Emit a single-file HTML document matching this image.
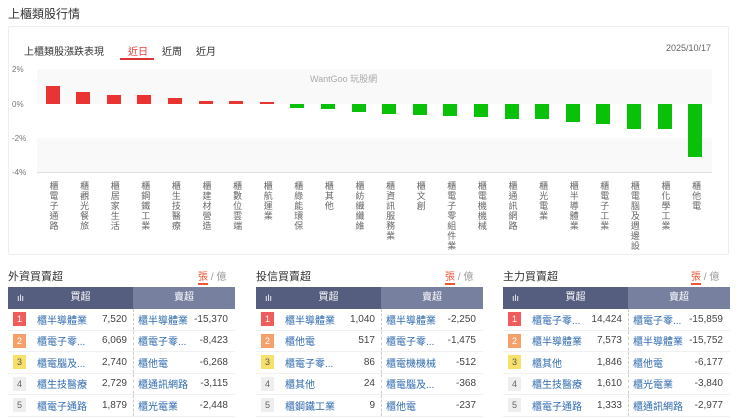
<!DOCTYPE html>
<html><head><meta charset="utf-8"><style>
*{margin:0;padding:0;box-sizing:border-box}
body{width:740px;height:418px;background:#fff;font-family:"Liberation Sans","Noto Sans CJK TC",sans-serif;position:relative;overflow:hidden;color:#333}
.a{position:absolute}
.bar{position:absolute;width:14px}
.r{background:#e93433}.g{background:#0ac10a}
.lab{position:absolute;top:181px;writing-mode:vertical-rl;font-size:9px;color:#666;line-height:9px;letter-spacing:1px;width:10px;margin-left:-5px}
.ax{position:absolute;left:12px;font-size:8px;color:#777;width:22px;text-align:left}
.tb{position:absolute;top:287px;width:227px}
.hd{height:22px;display:flex;color:#fff;font-size:10px;line-height:22px}
.hd .h1{background:#555e7f;width:125px;position:relative;text-align:center;padding-left:20px}
.hd .h2{background:#7880a0;flex:1;text-align:center}
.row{height:21.5px;display:flex;align-items:center;font-size:10px;border-bottom:1px solid #f0f0f0;position:relative}
.rk{width:13px;height:14px;font-size:9px;line-height:14px;text-align:center;margin-left:5px;color:#fff;flex:none}
.n1{background:#f05b5b}.n2{background:#f5a06b}.n3{background:#f8e16a;color:#555}.n4,.n5{background:#eee;color:#666}
.nm{color:#2f6aae;margin-left:11px;width:58px;white-space:nowrap;flex:none}
.v1{width:32px;text-align:right;color:#444;flex:none}
.sep{position:absolute;left:125px;top:0;bottom:0;border-left:1px dashed #ccc}
.nm2{color:#2f6aae;margin-left:11px;width:52px;white-space:nowrap;flex:none}
.v2{width:38px;text-align:right;color:#444;flex:none}
.tt{position:absolute;top:268px;font-size:11px;color:#333}
.sw{position:absolute;top:268px;font-size:10px;color:#999}
.sw b{color:#e53;font-weight:normal;border-bottom:2px solid #e53}
</style></head><body>
<div class="a" style="left:8px;top:5px;font-size:12px;color:#333">上櫃類股行情</div>
<div class="a" style="left:8px;top:26px;width:721px;height:229px;border:1px solid #eee;border-radius:2px"></div>
<div class="a" style="left:24px;top:43px;font-size:10px;color:#333">上櫃類股漲跌表現</div>
<div class="a" style="left:128px;top:43px;font-size:10px;color:#e03b3b">近日</div>
<div class="a" style="left:120px;top:58px;width:34px;height:2px;background:#d33"></div>
<div class="a" style="left:162px;top:43px;font-size:10px;color:#333">近周</div>
<div class="a" style="left:196px;top:43px;font-size:10px;color:#333">近月</div>
<div class="a" style="left:666px;top:43px;font-size:9px;color:#666">2025/10/17</div>
<div class="a" style="left:37px;top:69px;width:675px;height:35px;background:#f9f9f9"></div>
<div class="a" style="left:37px;top:138px;width:675px;height:34px;background:#f9f9f9"></div>
<div class="a" style="left:37px;top:172px;width:675px;height:1px;background:#ddd"></div>
<div class="ax" style="top:65px">2%</div><div class="ax" style="top:100px">0%</div><div class="ax" style="top:134px">-2%</div><div class="ax" style="top:168px">-4%</div>
<div class="a" style="left:310px;top:72px;font-size:9px;color:#aaa">WantGoo 玩股網</div>
<div class="bar r" style="left:45.5px;top:86px;height:18px"></div>
<div class="bar r" style="left:76.1px;top:92px;height:12px"></div>
<div class="bar r" style="left:106.7px;top:95px;height:9px"></div>
<div class="bar r" style="left:137.3px;top:95px;height:9px"></div>
<div class="bar r" style="left:167.9px;top:98px;height:6px"></div>
<div class="bar r" style="left:198.5px;top:101px;height:3px"></div>
<div class="bar r" style="left:229.1px;top:101px;height:3px"></div>
<div class="bar r" style="left:259.7px;top:102px;height:2px"></div>
<div class="bar g" style="left:290.3px;top:104px;height:4px"></div>
<div class="bar g" style="left:320.9px;top:104px;height:5px"></div>
<div class="bar g" style="left:351.5px;top:104px;height:8px"></div>
<div class="bar g" style="left:382.1px;top:104px;height:10px"></div>
<div class="bar g" style="left:412.7px;top:104px;height:11px"></div>
<div class="bar g" style="left:443.3px;top:104px;height:12px"></div>
<div class="bar g" style="left:473.9px;top:104px;height:13px"></div>
<div class="bar g" style="left:504.5px;top:104px;height:15px"></div>
<div class="bar g" style="left:535.1px;top:104px;height:15px"></div>
<div class="bar g" style="left:565.7px;top:104px;height:18px"></div>
<div class="bar g" style="left:596.3px;top:104px;height:20px"></div>
<div class="bar g" style="left:626.9px;top:104px;height:25px"></div>
<div class="bar g" style="left:657.5px;top:104px;height:25px"></div>
<div class="bar g" style="left:688.1px;top:104px;height:53px"></div>
<div class="lab" style="left:52.5px">櫃電子通路</div>
<div class="lab" style="left:83.1px">櫃觀光餐旅</div>
<div class="lab" style="left:113.7px">櫃居家生活</div>
<div class="lab" style="left:144.3px">櫃鋼鐵工業</div>
<div class="lab" style="left:174.9px">櫃生技醫療</div>
<div class="lab" style="left:205.5px">櫃建材營造</div>
<div class="lab" style="left:236.1px">櫃數位雲端</div>
<div class="lab" style="left:266.7px">櫃航運業</div>
<div class="lab" style="left:297.3px">櫃綠能環保</div>
<div class="lab" style="left:327.9px">櫃其他</div>
<div class="lab" style="left:358.5px">櫃紡織纖維</div>
<div class="lab" style="left:389.1px">櫃資訊服務業</div>
<div class="lab" style="left:419.7px">櫃文創</div>
<div class="lab" style="left:450.3px">櫃電子零組件業</div>
<div class="lab" style="left:480.9px">櫃電機機械</div>
<div class="lab" style="left:511.5px">櫃通訊網路</div>
<div class="lab" style="left:542.1px">櫃光電業</div>
<div class="lab" style="left:572.7px">櫃半導體業</div>
<div class="lab" style="left:603.3px">櫃電子工業</div>
<div class="lab" style="left:633.9px">櫃電腦及週邊設</div>
<div class="lab" style="left:664.5px">櫃化學工業</div>
<div class="lab" style="left:695.1px">櫃他電</div>

<div class="tt" style="left:8px">外資買賣超</div><div class="sw" style="left:198px"><b>張</b> / 億</div>
<div class="tt" style="left:256px">投信買賣超</div><div class="sw" style="left:445px"><b>張</b> / 億</div>
<div class="tt" style="left:503px">主力買賣超</div><div class="sw" style="left:691px"><b>張</b> / 億</div>

<div class="tb" style="left:8px">
<div class="hd"><div class="h1"><span style="position:absolute;left:9px;font-size:9px">ılı</span>買超</div><div class="h2">賣超</div></div>
<div class="row"><div class="sep"></div><div class="rk n1">1</div><div class="nm">櫃半導體業</div><div class="v1">7,520</div><div class="nm2">櫃半導體業</div><div class="v2">-15,370</div></div>
<div class="row"><div class="sep"></div><div class="rk n2">2</div><div class="nm">櫃電子零...</div><div class="v1">6,069</div><div class="nm2">櫃電子零...</div><div class="v2">-8,423</div></div>
<div class="row"><div class="sep"></div><div class="rk n3">3</div><div class="nm">櫃電腦及...</div><div class="v1">2,740</div><div class="nm2">櫃他電</div><div class="v2">-6,268</div></div>
<div class="row"><div class="sep"></div><div class="rk n4">4</div><div class="nm">櫃生技醫療</div><div class="v1">2,729</div><div class="nm2">櫃通訊網路</div><div class="v2">-3,115</div></div>
<div class="row"><div class="sep"></div><div class="rk n5">5</div><div class="nm">櫃電子通路</div><div class="v1">1,879</div><div class="nm2">櫃光電業</div><div class="v2">-2,448</div></div>
</div>
<div class="tb" style="left:256px">
<div class="hd"><div class="h1"><span style="position:absolute;left:9px;font-size:9px">ılı</span>買超</div><div class="h2">賣超</div></div>
<div class="row"><div class="sep"></div><div class="rk n1">1</div><div class="nm">櫃半導體業</div><div class="v1">1,040</div><div class="nm2">櫃半導體業</div><div class="v2">-2,250</div></div>
<div class="row"><div class="sep"></div><div class="rk n2">2</div><div class="nm">櫃他電</div><div class="v1">517</div><div class="nm2">櫃電子零...</div><div class="v2">-1,475</div></div>
<div class="row"><div class="sep"></div><div class="rk n3">3</div><div class="nm">櫃電子零...</div><div class="v1">86</div><div class="nm2">櫃電機機械</div><div class="v2">-512</div></div>
<div class="row"><div class="sep"></div><div class="rk n4">4</div><div class="nm">櫃其他</div><div class="v1">24</div><div class="nm2">櫃電腦及...</div><div class="v2">-368</div></div>
<div class="row"><div class="sep"></div><div class="rk n5">5</div><div class="nm">櫃鋼鐵工業</div><div class="v1">9</div><div class="nm2">櫃他電</div><div class="v2">-237</div></div>
</div>
<div class="tb" style="left:503px">
<div class="hd"><div class="h1"><span style="position:absolute;left:9px;font-size:9px">ılı</span>買超</div><div class="h2">賣超</div></div>
<div class="row"><div class="sep"></div><div class="rk n1">1</div><div class="nm">櫃電子零...</div><div class="v1">14,424</div><div class="nm2">櫃電子零...</div><div class="v2">-15,859</div></div>
<div class="row"><div class="sep"></div><div class="rk n2">2</div><div class="nm">櫃半導體業</div><div class="v1">7,573</div><div class="nm2">櫃半導體業</div><div class="v2">-15,752</div></div>
<div class="row"><div class="sep"></div><div class="rk n3">3</div><div class="nm">櫃其他</div><div class="v1">1,846</div><div class="nm2">櫃他電</div><div class="v2">-6,177</div></div>
<div class="row"><div class="sep"></div><div class="rk n4">4</div><div class="nm">櫃生技醫療</div><div class="v1">1,610</div><div class="nm2">櫃光電業</div><div class="v2">-3,840</div></div>
<div class="row"><div class="sep"></div><div class="rk n5">5</div><div class="nm">櫃電子通路</div><div class="v1">1,333</div><div class="nm2">櫃通訊網路</div><div class="v2">-2,977</div></div>
</div>
</body></html>
